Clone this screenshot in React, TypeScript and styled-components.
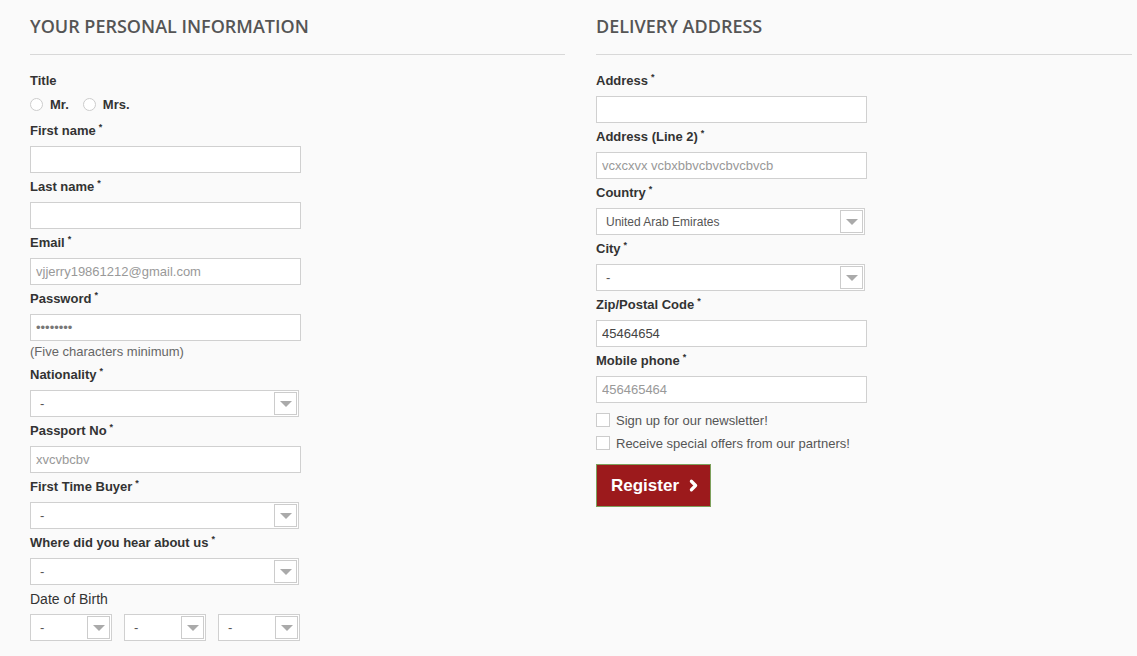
import React from "react";
import styled, { createGlobalStyle } from "styled-components";
import { ChevronRight } from "lucide-react";

const GlobalStyle = createGlobalStyle`
  body {
    margin: 0;
    background: #fafafa;
    font-family: "Liberation Sans", Arial, sans-serif;
    color: #333;
  }
`;

const Page = styled.div`
  display: grid;
  grid-template-columns: 535px 536px;
  column-gap: 31px;
  padding: 14px 5px 0 30px;
  min-height: 642px;
`;

const Column = styled.section`
  display: flex;
  flex-direction: column;
`;

const Heading = styled.h3`
  margin: 0 0 15px;
  padding-bottom: 16px;
  border-bottom: 1px solid #d8d8d8;
  font-family: "Open Sans", sans-serif;
  font-size: 18px;
  font-weight: 600;
  line-height: 24px;
  color: #555;
  text-transform: uppercase;
`;

const Label = styled.label<{ $plain?: boolean }>`
  display: block;
  font-size: ${(p) => (p.$plain ? 14 : 13)}px;
  font-weight: ${(p) => (p.$plain ? "normal" : "bold")};
  line-height: 20px;
  padding-top: 1px;
  margin-bottom: 5px;
  color: #333;
`;

const Req = styled.sup`
  font-size: 9px;
  margin-left: 3px;
  vertical-align: 5px;
  line-height: 0;
`;

const Input = styled.input<{ $tone?: string }>`
  display: block;
  box-sizing: border-box;
  width: 271px;
  height: 27px;
  margin: 0 0 3px;
  padding: 0 5px;
  border: 1px solid #d0d0d0;
  background: #fff;
  font-family: "Liberation Sans", Arial, sans-serif;
  font-size: 13px;
  color: ${(p) => p.$tone ?? "#999"};
  outline: none;
`;

const Helper = styled.div`
  font-size: 13px;
  line-height: 19px;
  color: #666;
  margin: 1px 0 3px;
`;

const SelectBox = styled.div<{ $w: number; $small?: boolean }>`
  box-sizing: border-box;
  width: ${(p) => p.$w}px;
  height: 27px;
  margin-bottom: 3px;
  border: 1px solid #d0d0d0;
  background: #fff;
  display: flex;
  align-items: center;
  justify-content: space-between;
  padding: 0 1px 0 9px;
  font-size: ${(p) => (p.$small ? 12 : 13)}px;
  color: #555;
`;

const ArrowBox = styled.span`
  box-sizing: border-box;
  width: 23px;
  height: 23px;
  border: 1px solid #ccc;
  background: #fff;
  display: flex;
  align-items: center;
  justify-content: center;
  &::after {
    content: "";
    border-left: 6px solid transparent;
    border-right: 6px solid transparent;
    border-top: 6px solid #aaa;
  }
`;

const RadioRow = styled.div`
  display: flex;
  align-items: center;
  gap: 14px;
  height: 20px;
  margin: -2px 0 6px;
`;

const RadioOption = styled.span`
  display: flex;
  align-items: center;
  gap: 7px;
  font-size: 13px;
  font-weight: bold;
  color: #333;
`;

const RadioCircle = styled.span`
  box-sizing: border-box;
  width: 13px;
  height: 13px;
  border-radius: 50%;
  border: 1px solid #ccc;
  background: #fff;
`;

const DobRow = styled.div`
  display: flex;
  gap: 12px;
`;

const CheckRow = styled.div<{ $first?: boolean }>`
  display: flex;
  align-items: center;
  gap: 6px;
  height: 20px;
  margin-top: ${(p) => (p.$first ? 4 : 3)}px;
  font-size: 13px;
  color: #555;
`;

const CheckBox = styled.span`
  box-sizing: border-box;
  width: 14px;
  height: 14px;
  border: 1px solid #ccc;
  background: #fff;
`;

const RegisterButton = styled.button`
  align-self: flex-start;
  margin-top: 11px;
  box-sizing: border-box;
  width: 115px;
  height: 43px;
  padding: 0 0 0 14px;
  display: flex;
  align-items: center;
  gap: 6px;
  background: #9c1a1c;
  border: 1px solid #7da05c;
  color: #fff;
  font-family: "Liberation Sans", Arial, sans-serif;
  font-size: 17px;
  font-weight: bold;
  cursor: pointer;
`;

type FieldProps = { label: string; required?: boolean; plain?: boolean; children: React.ReactNode };

const Field = ({ label, required, plain, children }: FieldProps) => (
  <div>
    <Label $plain={plain}>
      {label}
      {required && <Req>*</Req>}
    </Label>
    {children}
  </div>
);

const Select = ({ value = "-", width = 269, small }: { value?: string; width?: number; small?: boolean }) => (
  <SelectBox $w={width} $small={small}>
    <span>{value}</span>
    <ArrowBox />
  </SelectBox>
);

export default function App() {
  return (
    <>
      <GlobalStyle />
      <Page>
        <Column>
          <Heading>Your personal information</Heading>
          <Label>Title</Label>
          <RadioRow>
            <RadioOption>
              <RadioCircle />
              Mr.
            </RadioOption>
            <RadioOption>
              <RadioCircle />
              Mrs.
            </RadioOption>
          </RadioRow>
          <Field label="First name" required>
            <Input />
          </Field>
          <Field label="Last name" required>
            <Input />
          </Field>
          <Field label="Email" required>
            <Input defaultValue="vjjerry19861212@gmail.com" />
          </Field>
          <Field label="Password" required>
            <Input type="password" defaultValue="12345678" $tone="#777" style={{ marginBottom: 0 }} />
          </Field>
          <Helper>(Five characters minimum)</Helper>
          <Field label="Nationality" required>
            <Select />
          </Field>
          <Field label="Passport No" required>
            <Input defaultValue="xvcvbcbv" />
          </Field>
          <Field label="First Time Buyer" required>
            <Select />
          </Field>
          <Field label="Where did you hear about us" required>
            <Select />
          </Field>
          <Field label="Date of Birth" plain>
            <DobRow>
              <Select width={82} />
              <Select width={82} />
              <Select width={82} />
            </DobRow>
          </Field>
        </Column>
        <Column>
          <Heading>Delivery address</Heading>
          <Field label="Address" required>
            <Input />
          </Field>
          <Field label="Address (Line 2)" required>
            <Input defaultValue="vcxcxvx vcbxbbvcbvcbvcbvcb" />
          </Field>
          <Field label="Country" required>
            <Select value="United Arab Emirates" small />
          </Field>
          <Field label="City" required>
            <Select />
          </Field>
          <Field label="Zip/Postal Code" required>
            <Input defaultValue="45464654" $tone="#444" />
          </Field>
          <Field label="Mobile phone" required>
            <Input defaultValue="456465464" />
          </Field>
          <CheckRow $first>
            <CheckBox />
            Sign up for our newsletter!
          </CheckRow>
          <CheckRow>
            <CheckBox />
            Receive special offers from our partners!
          </CheckRow>
          <RegisterButton>
            Register
            <ChevronRight size={17} strokeWidth={4.5} />
          </RegisterButton>
        </Column>
      </Page>
    </>
  );
}
